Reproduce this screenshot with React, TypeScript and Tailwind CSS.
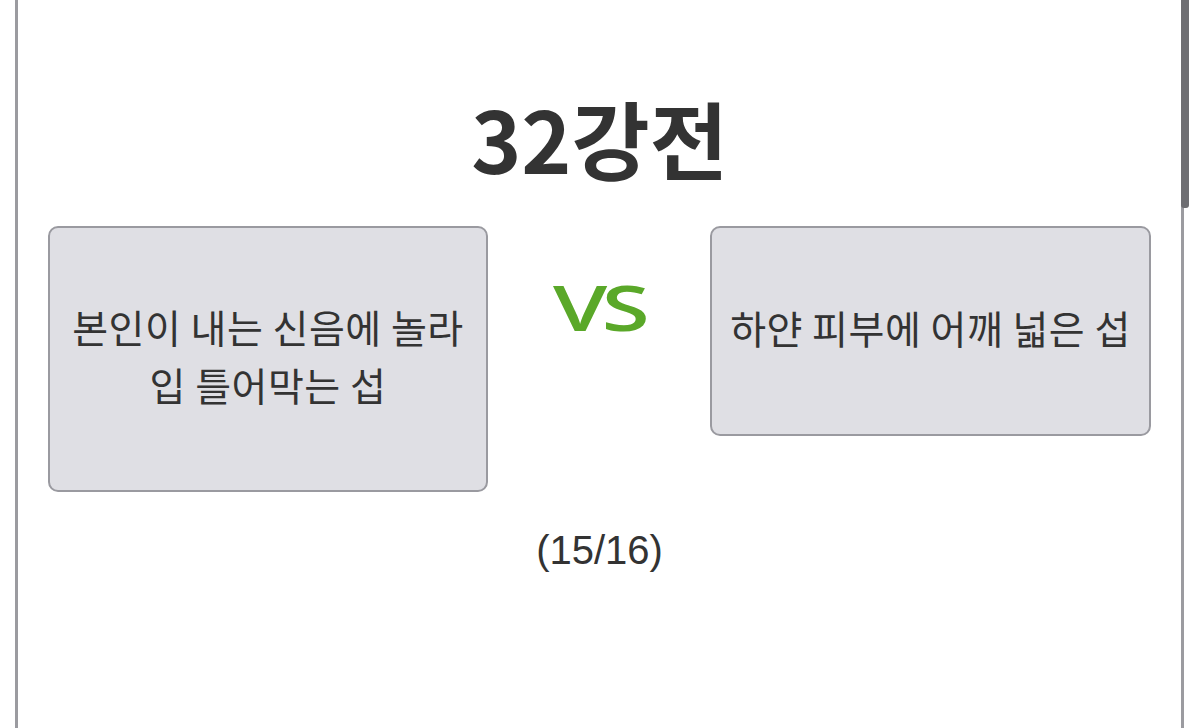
import React from "react";

export default function App() {
  const kr = { fontFamily: '"Noto Sans CJK KR", "Noto Sans", sans-serif' };
  return (
    <div className="w-[1199px] h-[728px] bg-white overflow-hidden flex">
      <div className="w-[15px] shrink-0" />
      <div className="relative w-[1169px] h-[728px] border-l-[3px] border-r-[3px] border-[#9b9ba0] flex flex-col items-center">
        <div className="absolute right-[-8px] top-0 w-[8px] h-[208px] bg-[#6e6e72] rounded-b-[3px]" />
        <h1
          className="mt-[87px] text-[85px] font-bold text-[#333333] leading-[100px]"
          style={kr}
        >
          32강전
        </h1>
        <div className="mt-[39px] w-full px-[30px] flex items-start">
          <div
            className="w-[440px] h-[266px] shrink-0 rounded-[10px] border-2 border-[#9a9aa0] bg-[#dfdfe4] flex items-center justify-center text-center text-[39px] leading-[58px] text-[#333333] tracking-[0.5px] pb-[8px]"
            style={kr}
          >
            <div>
              본인이 내는 신음에 놀라
              <br />
              입 틀어막는 섭
            </div>
          </div>
          <div className="flex-1 flex justify-center pt-[46px]">
            <span
              className="text-[64px] leading-[70px] text-[#5aa829] tracking-[-4px] inline-block scale-x-[1.36]"
              style={{ fontFamily: '"Open Sans", "Liberation Sans", sans-serif', fontWeight: 600 }}
            >
              VS
            </span>
          </div>
          <div
            className="w-[441px] h-[210px] shrink-0 rounded-[10px] border-2 border-[#9a9aa0] bg-[#dfdfe4] flex items-center justify-center text-center text-[39px] leading-[58px] text-[#333333] tracking-[0.5px] pb-[8px]"
            style={kr}
          >
            하얀 피부에 어깨 넓은 섭
          </div>
        </div>
        <div
          className="mt-[35px] text-[40px] leading-[46px] text-[#333333]"
          style={{ fontFamily: '"Liberation Sans", Arial, sans-serif' }}
        >
          (15/16)
        </div>
      </div>
    </div>
  );
}
